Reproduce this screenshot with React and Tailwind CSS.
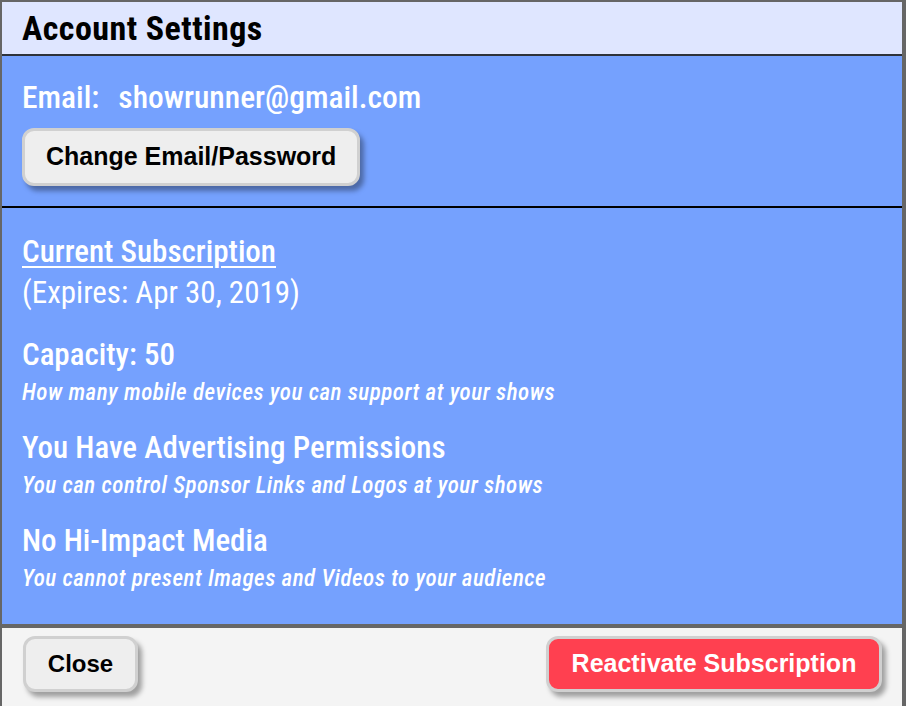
import React from 'react';

const cond = "font-['Roboto_Condensed','Roboto',sans-serif] [font-stretch:75%]";
const arial = "font-['Liberation_Sans',Arial,sans-serif] [font-stretch:normal] font-bold";
const raised = 'rounded-[12px] border-[3px] border-[#d0d0d0] shadow-[4px_5px_5px_rgba(0,0,0,0.35)]';

function Perk({ title, note }) {
  return (
    <div>
      <p className="text-[31px] leading-[36px] font-medium">{title}</p>
      <p className="text-[23px] leading-[26px] italic font-medium tracking-[0.5px] mt-[7px]">{note}</p>
    </div>
  );
}

export default function App() {
  return (
    <div className={`w-[906px] h-[706px] overflow-hidden bg-[#666666] pt-[2px] pl-[2px] pr-[4px] ${cond}`}>
      <div className="flex flex-col h-full">
        <div className="h-[52px] bg-[#dfe6ff] border-b-2 border-[#2e323a] box-content px-[20px] flex items-center">
          <h1 className="text-[34px] leading-none font-bold tracking-[0.45px] text-black">Account Settings</h1>
        </div>

        <div className="bg-[#75a1fe] text-white border-b-2 border-black pt-[25px] pb-[20px] px-[20px]">
          <p className="text-[31.5px] leading-[34px] font-medium">
            <span>Email:</span>
            <span className="ml-[19px]">showrunner@gmail.com</span>
          </p>
          <button className={`mt-[13px] h-[58px] px-[21px] bg-[#eeeeee] text-black text-[25px] ${raised} ${arial}`}>
            Change Email/Password
          </button>
        </div>

        <div className="bg-[#75a1fe] text-white flex-1 pt-[26px] px-[20px] flex flex-col gap-[24px] border-b-4 border-[#666666]">
          <div className="mb-[2px]">
            <p className="text-[31px] leading-[36px] font-medium underline underline-offset-[4px] decoration-[2px]">Current Subscription</p>
            <p className="text-[31px] leading-[36px] mt-[5px]">(Expires: Apr 30, 2019)</p>
          </div>
          <Perk title="Capacity: 50" note="How many mobile devices you can support at your shows" />
          <Perk title="You Have Advertising Permissions" note="You can control Sponsor Links and Logos at your shows" />
          <Perk title="No Hi-Impact Media" note="You cannot present Images and Videos to your audience" />
        </div>

        <div className="h-[78px] shrink-0 bg-[#f4f4f4] px-[20px] pt-[8px] flex items-start justify-between">
          <button className={`h-[56px] w-[115px] ml-[1px] bg-[#eeeeee] text-black text-[24px] ${raised} ${arial}`}>
            Close
          </button>
          <button className={`h-[56px] w-[336px] bg-[#ff4050] text-white text-[25px] ${raised} ${arial}`}>
            Reactivate Subscription
          </button>
        </div>
      </div>
    </div>
  );
}
